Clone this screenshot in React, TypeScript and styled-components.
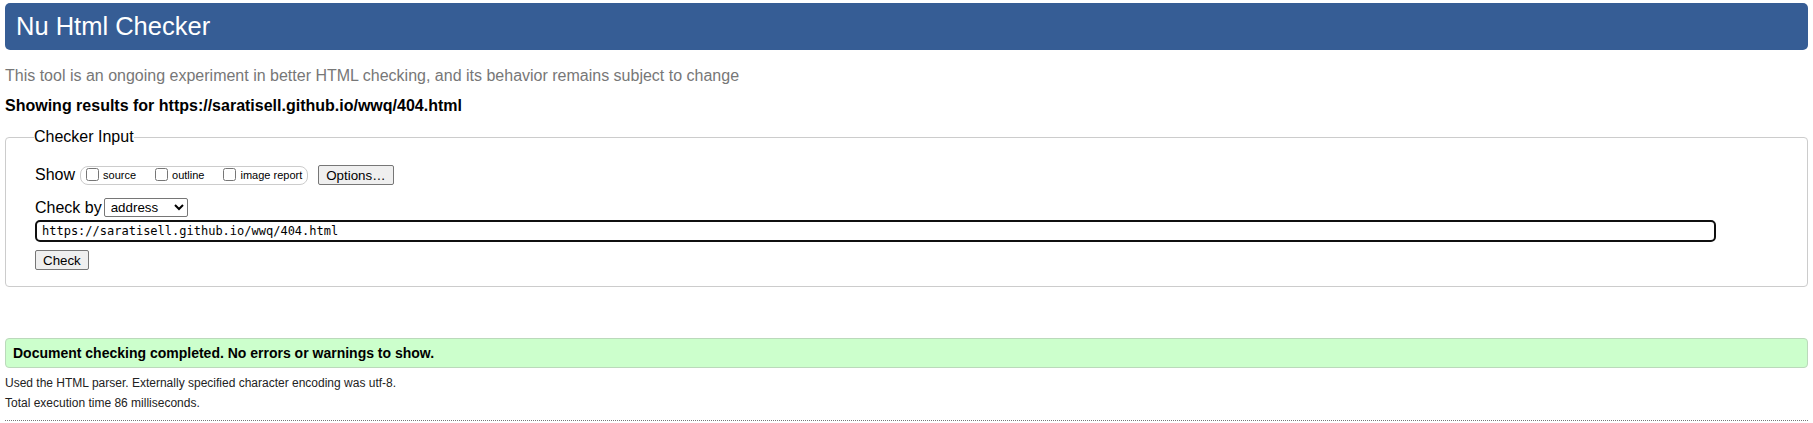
import React from 'react';
import styled, { createGlobalStyle } from 'styled-components';

const GlobalStyle = createGlobalStyle`
  html, body {
    margin: 0;
    padding: 0;
    background: #fff;
  }
  body {
    font-family: "Liberation Sans", Arial, sans-serif;
    color: #000;
  }
`;

const Page = styled.div`
  padding: 3px 5px 0;
`;

const Title = styled.h1`
  margin: 0;
  height: 47px;
  display: flex;
  align-items: center;
  padding: 0 11px;
  background: #365d95;
  border-radius: 5px;
  color: #fff;
  font-size: 25.5px;
  font-weight: normal;
`;

const About = styled.p`
  margin: 17px 0 0;
  color: #777;
  font-size: 16px;
  line-height: 18px;
`;

const Results = styled.p`
  margin: 12px 0 0;
  font-size: 16px;
  line-height: 18px;
  font-weight: bold;
`;

const Fieldset = styled.fieldset`
  margin: 13px 0 0;
  padding: 0 29px 16px;
  border: 1px solid #ccc;
  border-radius: 4px;
`;

const Legend = styled.legend`
  margin-left: -1px;
  padding: 0;
  font-size: 16px;
  line-height: 18px;
`;

const Row = styled.div<{ $top: number }>`
  display: flex;
  align-items: center;
  margin-top: ${({ $top }) => $top}px;
  font-size: 16px;
`;

const Label = styled.span<{ $gap: number }>`
  font-size: 16px;
  line-height: 18px;
  margin-right: ${({ $gap }) => $gap}px;
`;

const ShowGroup = styled.span`
  display: inline-flex;
  align-items: center;
  height: 17px;
  border: 1px solid #ccc;
  border-radius: 8px;
  padding: 0 5px 0 5px;
  margin-right: 10px;
`;

const Option = styled.label<{ $gap: number }>`
  display: inline-flex;
  align-items: center;
  font-size: 11px;
  margin-right: ${({ $gap }) => $gap}px;
`;

const Box = styled.input.attrs({ type: 'checkbox' })`
  width: 13px;
  height: 13px;
  margin: 0 4px 2px 0;
`;

const Button = styled.button`
  font-family: "Liberation Sans", Arial, sans-serif;
  font-size: 13.33px;
  height: 20px;
  padding: 0 7px;
  background: #efefef;
  border: 1px solid #767676;
  border-radius: 2px;
  color: #000;
`;

const Select = styled.select`
  font-family: "Liberation Sans", Arial, sans-serif;
  font-size: 13.33px;
  height: 19px;
  width: 84px;
  border: 1px solid #767676;
  border-radius: 2px;
  background: #fff;
  padding: 0 2px;
`;

const UrlInput = styled.input`
  display: block;
  box-sizing: border-box;
  margin-top: 3px;
  width: 1681px;
  height: 22px;
  border: 2px solid #101010;
  border-radius: 5px;
  padding: 0 5px;
  font-family: "DejaVu Sans Mono", "Liberation Mono", monospace;
  font-size: 12px;
  color: #000;
  outline: none;
`;

const CheckRow = styled.div`
  margin-top: 8px;
  display: flex;
`;

const Success = styled.p`
  margin: 51px 0 0;
  height: 30px;
  box-sizing: border-box;
  display: flex;
  align-items: center;
  padding: 0 7px;
  background: #ccffcc;
  border: 1px solid #bbd9bb;
  border-radius: 4px;
  font-size: 14px;
  font-weight: bold;
`;

const Details = styled.p<{ $top: number }>`
  margin: ${({ $top }) => $top}px 0 0;
  font-size: 12px;
  line-height: 14px;
  color: #222;
`;

const Rule = styled.hr`
  margin: 10px 0 0;
  border: 0;
  border-top: 1px dotted #777;
`;

export default function App() {
  return (
    <Page>
      <GlobalStyle />
      <Title>Nu Html Checker</Title>
      <About>
        This tool is an ongoing experiment in better HTML checking, and its behavior remains subject to change
      </About>
      <Results>Showing results for https://saratisell.github.io/wwq/404.html</Results>
      <Fieldset>
        <Legend>Checker Input</Legend>
        <Row $top={19}>
          <Label $gap={5}>Show</Label>
          <ShowGroup>
            <Option $gap={19}>
              <Box />
              source
            </Option>
            <Option $gap={19}>
              <Box />
              outline
            </Option>
            <Option $gap={0}>
              <Box />
              image report
            </Option>
          </ShowGroup>
          <Button type="button">Options…</Button>
        </Row>
        <Row $top={13}>
          <Label $gap={2}>Check by</Label>
          <Select defaultValue="address">
            <option value="address">address</option>
            <option value="file">file upload</option>
            <option value="text">text input</option>
          </Select>
        </Row>
        <UrlInput defaultValue="https://saratisell.github.io/wwq/404.html" />
        <CheckRow>
          <Button type="button">Check</Button>
        </CheckRow>
      </Fieldset>
      <Success>Document checking completed. No errors or warnings to show.</Success>
      <Details $top={8}>Used the HTML parser. Externally specified character encoding was utf-8.</Details>
      <Details $top={6}>Total execution time 86 milliseconds.</Details>
      <Rule />
    </Page>
  );
}
